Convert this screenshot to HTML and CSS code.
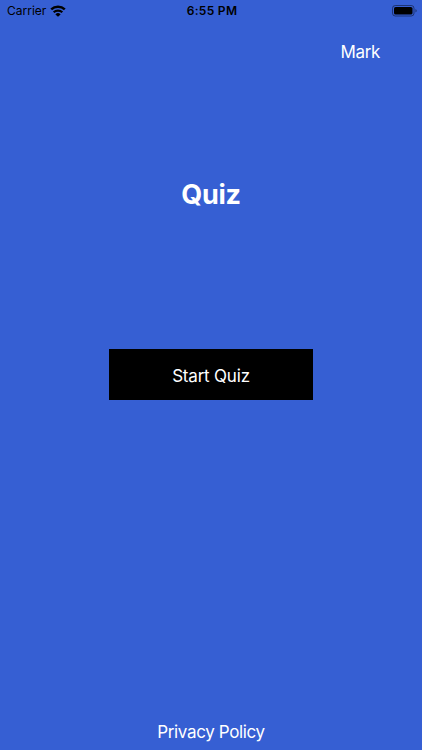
FILE: index.html
```html
<!DOCTYPE html>
<html lang="en">
	<head>
		<meta charset="utf-8">
		<meta name="viewport" content="width=device-width, initial-scale=1">
		<title>Quiz</title>
		<link rel="stylesheet" href="styles.css">
	</head>

	<body>
		<div class="status-bar">
			<div class="carrier">
				<span>Carrier</span>
				<svg class="wifi" viewBox="0 0 16 12" width="16" height="12">
					<path d="M1.2 4.4a9.8 9.8 0 0 1 13.6 0" fill="none" stroke="#000" stroke-width="2.5"/>
					<path d="M3.7 7.3a6.1 6.1 0 0 1 8.6 0" fill="none" stroke="#000" stroke-width="2.2"/>
					<path d="M8 11.8 5.4 9.4a3.6 3.6 0 0 1 5.2 0z"/>
				</svg>
			</div>
			<time class="clock">6:55 PM</time>
			<svg class="battery" viewBox="0 0 25 12" width="25" height="12">
				<rect x="0.5" y="0.5" width="21.5" height="10.5" rx="2.8" fill="none" stroke="#000" stroke-opacity="0.45"/>
				<rect x="2" y="2" width="18.5" height="7.5" rx="1.6"/>
				<path d="M23.5 4v3.6a2 2 0 0 0 0-3.6z" fill-opacity="0.5"/>
			</svg>
		</div>

		<header class="top">
			<a class="user" href="#">Mark</a>
		</header>

		<main class="content">
			<h1 class="title">Quiz</h1>
			<button class="start" type="button">Start Quiz</button>
		</main>

		<footer class="bottom">
			<a class="privacy" href="#">Privacy Policy</a>
		</footer>
	</body>
</html>
```
FILE: styles.css
```css
:root {
	--bg: #365fd3;
	--fg: #ffffff;
	--dark: #000000;
}

* {
	box-sizing: border-box;
}

body {
	display: flex;
	flex-direction: column;
	height: 100vh;
	margin: 0;
	overflow: hidden;
	background-color: var(--bg);
	color: var(--fg);
	font-family: Inter, sans-serif;
	font-size: 17px;
}

a {
	color: var(--fg);
	letter-spacing: -0.37px;
	text-decoration: none;
}

.status-bar {
	display: grid;
	grid-template-columns: 1fr auto 1fr;
	align-items: center;
	height: 21px;
	padding: 0 5px 0 7px;
	color: var(--dark);
	font-size: 12px;
}

.carrier {
	display: flex;
	align-items: center;
	gap: 4px;
}

.clock {
	font-weight: 600;
	letter-spacing: 0.3px;
}

.battery {
	justify-self: end;
}

.top {
	display: flex;
	justify-content: flex-end;
	padding: 21px 42px 0 0;
	line-height: 20px;
}

.content {
	display: flex;
	flex: 1;
	flex-direction: column;
	align-items: center;
}

.title {
	margin: 115px 0 0;
	font-size: 27px;
	font-weight: 700;
	letter-spacing: -0.3px;
	line-height: 36px;
}

.start {
	width: 204px;
	height: 51px;
	margin-top: 136px;
	padding: 2px 0 0;
	border: none;
	background-color: var(--dark);
	color: var(--fg);
	font: inherit;
	letter-spacing: -0.2px;
}

.bottom {
	padding-bottom: 8px;
	line-height: 20px;
	text-align: center;
}
```
